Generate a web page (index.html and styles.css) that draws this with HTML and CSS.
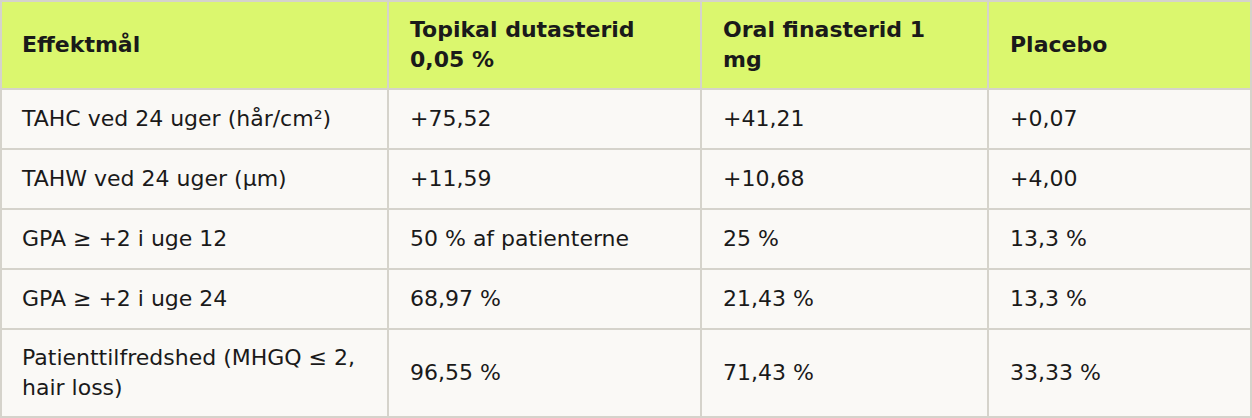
FILE: index.html
```html
<!DOCTYPE html>
<html lang="da">
<head>
<meta charset="utf-8">
<title>Effektmål</title>
<link rel="stylesheet" href="styles.css">
</head>
<body>
<table class="results">
  <thead>
    <tr>
      <th class="c1">Effektmål</th>
      <th class="c2">Topikal dutasterid 0,05 %</th>
      <th class="c3">Oral finasterid 1 mg</th>
      <th class="c4">Placebo</th>
    </tr>
  </thead>
  <tbody>
    <tr>
      <td>TAHC ved 24 uger (hår/cm²)</td>
      <td>+75,52</td>
      <td>+41,21</td>
      <td>+0,07</td>
    </tr>
    <tr>
      <td>TAHW ved 24 uger (µm)</td>
      <td>+11,59</td>
      <td>+10,68</td>
      <td>+4,00</td>
    </tr>
    <tr>
      <td>GPA ≥ +2 i uge 12</td>
      <td>50 % af patienterne</td>
      <td>25 %</td>
      <td>13,3 %</td>
    </tr>
    <tr>
      <td>GPA ≥ +2 i uge 24</td>
      <td>68,97 %</td>
      <td>21,43 %</td>
      <td>13,3 %</td>
    </tr>
    <tr class="tall">
      <td>Patienttilfredshed (MHGQ ≤ 2, hair loss)</td>
      <td>96,55 %</td>
      <td>71,43 %</td>
      <td>33,33 %</td>
    </tr>
  </tbody>
</table>
</body>
</html>
```

FILE: styles.css
```css
html, body {
  margin: 0;
  padding: 0;
  background: #faf9f6;
}

.results {
  width: 1252px;
  table-layout: fixed;
  border-collapse: separate;
  border-spacing: 0;
  border-top: 2px solid #d5d3cb;
  border-left: 2px solid #d5d3cb;
  font-family: "DejaVu Sans", Verdana, sans-serif;
  font-size: 22px;
  line-height: 30px;
  color: #1a1a1a;
}

.results th,
.results td {
  box-sizing: border-box;
  border-right: 2px solid #d5d3cb;
  border-bottom: 2px solid #d5d3cb;
  padding: 14px 20px 14px 21px;
  text-align: left;
  vertical-align: middle;
}

.results th:first-child,
.results td:first-child {
  padding-left: 20px;
}

.results th {
  background: #dbf76e;
  font-weight: bold;
  padding-top: 13px;
  padding-bottom: 13px;
}

.results td {
  background: #faf9f6;
}

.results tr.tall td {
  padding-top: 13px;
  padding-bottom: 13px;
}

.c1 { width: 387px; }
.c2 { width: 313px; }
.c3 { width: 287px; }
.c4 { width: 263px; }
```
